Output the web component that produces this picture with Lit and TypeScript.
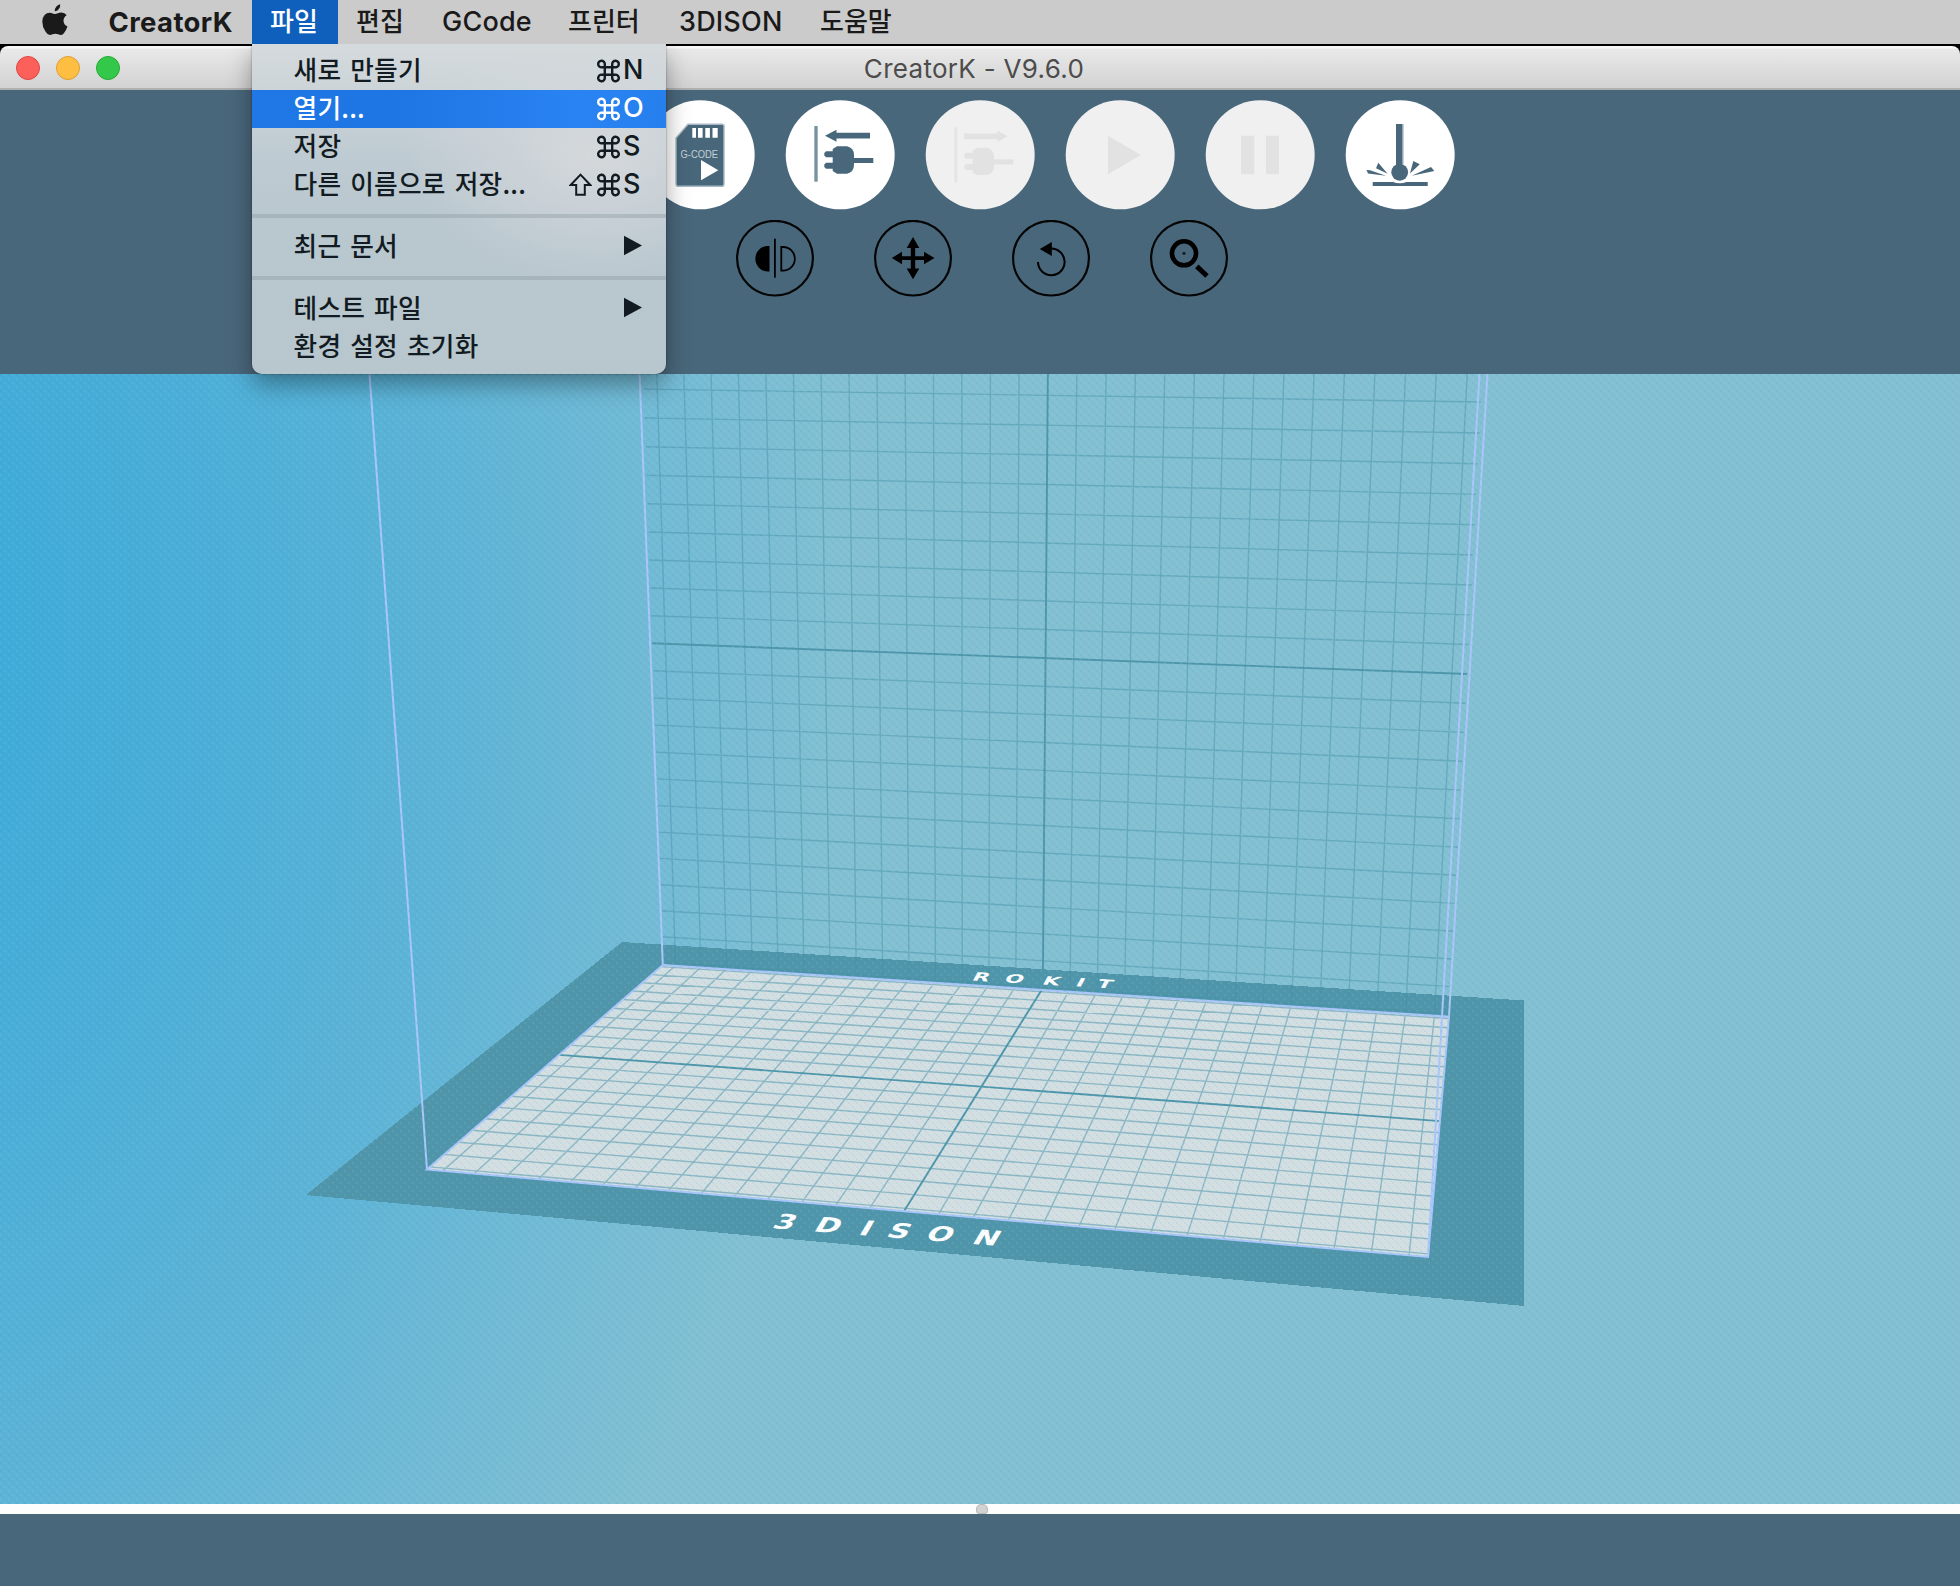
import { LitElement, html, svg, css, nothing } from "lit";
import { customElement, property } from "lit/decorators.js";
import { classMap } from "lit/directives/class-map.js";

type Pt = [number, number];

/** Projective map taking the rectangle (u0,v0)-(u1,v1) onto a quad given as
 *  [u0v0, u1v0, u1v1, u0v1]. */
function projector(u0: number, v0: number, u1: number, v1: number, q: Pt[]) {
  const [[x0, y0], [x1, y1], [x2, y2], [x3, y3]] = q;
  const dx1 = x1 - x2, dx2 = x3 - x2, dx3 = x0 - x1 + x2 - x3;
  const dy1 = y1 - y2, dy2 = y3 - y2, dy3 = y0 - y1 + y2 - y3;
  const den = dx1 * dy2 - dx2 * dy1;
  const g = (dx3 * dy2 - dx2 * dy3) / den;
  const h = (dx1 * dy3 - dx3 * dy1) / den;
  const a = x1 - x0 + g * x1, b = x3 - x0 + h * x3;
  const d = y1 - y0 + g * y1, e = y3 - y0 + h * y3;
  return (u: number, v: number): Pt => {
    const s = (u - u0) / (u1 - u0), t = (v - v0) / (v1 - v0);
    const w = g * s + h * t + 1;
    return [(a * s + b * t + x0) / w, (d * s + e * t + y0) / w];
  };
}

const seg = (p: Pt, q: Pt) =>
  `M${p[0].toFixed(1)} ${p[1].toFixed(1)}L${q[0].toFixed(1)} ${q[1].toFixed(1)}`;

// Scene corners, in viewport coordinates.
const FLOOR: Pt[] = [[662.8, 591], [1449, 642.7], [1428, 883], [427, 795.5]];
const HALF_W = 14.5;
const HALF_D = 10.2;
const BELOW = 12.1;
const floorAt = projector(-HALF_W, -HALF_D, HALF_W, HALF_D, FLOOR);
const wallAt = projector(-HALF_W, 0, HALF_W, BELOW, [
  [652.2, 269.3], [1467, 300], [1449, 642.7], [662.8, 591],
]);

function floorGrid() {
  let d = "";
  for (let u = -14; u <= 14; u++) if (u) d += seg(floorAt(u, -HALF_D), floorAt(u, HALF_D));
  for (let v = -10; v <= 10; v++) if (v) d += seg(floorAt(-HALF_W, v), floorAt(HALF_W, v));
  return d;
}
function wallGrid() {
  let d = "";
  for (let u = -14; u <= 14; u++) if (u) d += seg(wallAt(u, -11), wallAt(u, BELOW));
  for (let v = -11; v <= 12; v++) if (v) d += seg(wallAt(-HALF_W, v), wallAt(HALF_W, v));
  return d;
}

@customElement("build-scene")
class BuildScene extends LitElement {
  static styles = css`
    :host { display: block; height: 1130px; overflow: hidden; }
    .scene { display: block; width: 1960px; height: 1130px; }
    .thin { fill: none; stroke: #4590a5; stroke-width: 1.4; }
    .axis { fill: none; stroke: #4f96aa; stroke-width: 1.9; }
    .box { fill: none; stroke: #aac6fa; stroke-width: 2; }
    .label { font-family: "DejaVu Sans", sans-serif; font-weight: 700; fill: #fff; }
  `;
  render() {
    const pts = FLOOR.map((p) => p.join(",")).join(" ");
    return html`<svg class="scene" viewBox="0 0 1960 1130">
      <defs>
        <radialGradient id="sky" gradientUnits="userSpaceOnUse" cx="0" cy="0" r="1"
          gradientTransform="translate(-160 240) scale(1010 1500)">
          <stop offset="0.14" stop-color="#3fabd8"></stop>
          <stop offset="0.34" stop-color="#4aaed8"></stop>
          <stop offset="0.6" stop-color="#5db3d6"></stop>
          <stop offset="0.8" stop-color="#72bad5"></stop>
          <stop offset="1" stop-color="#84c0d2"></stop>
        </radialGradient>
        <pattern id="dither" width="8" height="8" patternUnits="userSpaceOnUse">
          <rect width="2" height="2" fill="#2f8fd0" opacity=".09"></rect>
          <rect x="4" y="4" width="2" height="2" fill="#2f8fd0" opacity=".09"></rect>
          <rect x="4" y="0" width="2" height="2" fill="#8ff0e0" opacity=".1"></rect>
          <rect x="0" y="4" width="2" height="2" fill="#8ff0e0" opacity=".1"></rect>
          <rect x="2" y="2" width="2" height="2" fill="#2f8fd0" opacity=".05"></rect>
          <rect x="6" y="6" width="2" height="2" fill="#2f8fd0" opacity=".05"></rect>
        </pattern>
      </defs>
      <rect width="1960" height="1130" fill="url(#sky)"></rect>
      <polygon fill="#5095a9" shape-rendering="crispEdges"
        points="622,568 1524,626.5 1524,932 306,821"></polygon>
      <path class="thin" opacity=".46" d=${wallGrid()}></path>
      <path class="axis" d=${seg(wallAt(-HALF_W, 0), wallAt(HALF_W, 0))}></path>
      <path class="axis" d=${seg(wallAt(0, -11), wallAt(0, BELOW))}></path>
      <polygon fill="#d5dfe2" points=${pts}></polygon>
      <path class="thin" opacity=".5" d=${floorGrid()}></path>
      <path class="axis" d=${seg(floorAt(-HALF_W, 0), floorAt(HALF_W, 0))}></path>
      <path class="axis" d=${seg(floorAt(0, -HALF_D), floorAt(0, HALF_D))}></path>
      <polygon class="box" points=${pts}></polygon>
      <path class="box" d="M369.5 0L427 795.5M639.6 0L662.8 591M1487.5 0L1449 642.7M1479.5 0L1428 883"></path>
      <text class="label" font-size="20" transform="matrix(1.5 .118 -.6 1 771 854)"
        x="0 27.5 57.5 76 102 133">3DISON</text>
      <text class="label" font-size="11.5" transform="matrix(1.9 .105 -.55 1 971 606.5)"
        x="0 17 37 54.5 65.5">ROKIT</text>
      <rect width="1960" height="1130" fill="url(#dither)"></rect>
    </svg>`;
  }
}

const plug = svg`
  <path d="M47.7 51.3V49L52 46.3H62Q69 48 69 55V65Q69 72 62 73.7H52L47.7 71V68.7H41L39.3 67V64.5L41 62.7H47.7V57.3H41L39.3 55.5V53L41 51.3Z"></path>
  <rect x="69" y="58" width="19.3" height="5"></rect>`;

const TOOLS: Record<string, unknown> = {
  card: svg`<g fill="#49677b">
      <path d="M43 24.3H77Q79 24.3 79 26.3V84Q79 86.3 77 86.3H33Q31 86.3 31 84V38Z" stroke="#a9b9c3" stroke-width="1.4"></path>
      <path fill="#fff" d="M47.3 28h3.7v9.7h-3.7zM53 28h4.6v9.7h-4.6zM60.3 28h4.6v9.7h-4.6zM67.5 28h5.2v9.7h-5.2z"></path>
      <path fill="#fff" d="M56 60L73.3 70.3L56 80.3Z"></path></g>
      <text class="code" x="35.5" y="58" textLength="37.5" lengthAdjust="spacingAndGlyphs">G-CODE</text>`,
  connect: svg`<rect x="29.3" y="26" width="3.4" height="55.7" fill="#7a93a2"></rect>
      <g fill="#49677b"><path d="M40 35.7L51.5 29.7V32.8H85V38.4H51.5V41.7Z"></path>${plug}</g>`,
  disconnect: svg`<g fill="#e2e2e2"><rect x="29.3" y="27.3" width="3.2" height="55.4" opacity=".8"></rect>
      <path d="M39 33.5H72.5V30.5L82.5 36.2L72.5 42V39.2H39Z"></path>
      <g transform="translate(0 1.4)">${plug}</g></g>`,
  play: svg`<path fill="#e2e2e2" d="M43 35.7L75.8 55L43 74.3Z"></path>`,
  pause: svg`<path fill="#e2e2e2" d="M36 35.7h13.3v38.6H36zM61 35.7h13v38.6H61z"></path>`,
  nozzle: svg`<g fill="#49677b"><rect x="51" y="24" width="6.4" height="42"></rect>
      <rect x="57.4" y="24" width="1.2" height="40" opacity=".5"></rect>
      <circle cx="54.7" cy="72.3" r="8.4"></circle>
      <path d="M27.7 82H48Q54.7 84.4 61.5 82H82.7V86H27.7Z"></path>
      <path d="M21.5 70L25 70.3L41 75.8L23 73.6ZM33.3 62.7L42.6 73.8L31 68.3ZM68.3 61L74.8 64.3L65 73.5ZM86 67L89.3 71L66.7 75.8Z"></path></g>`,
  mirror: svg`<path d="M33.5 26V51.5H31A12.8 12.8 0 0 1 31 26Z"></path>
      <rect x="38" y="18.7" width="1.8" height="39"></rect>
      <path fill="none" stroke="#000" stroke-width="1.8" d="M45.3 27H47A11.7 11.7 0 0 1 47 50.7H45.3Z"></path>`,
  move: svg`<path d="M39 17L45.3 28H41.2V36.2H50V31.8L60.5 38L50 44.2V40H41.2V48.5H45.3L39 59.3L32.7 48.5H36.8V40H28V44.2L17.8 38L28 31.8V36.2H36.8V28H32.7Z"></path>`,
  rotate: svg`<path fill="none" stroke="#000" stroke-width="2" d="M26 42A13.3 13.3 0 1 0 38.5 28.6"></path>
      <path d="M27.8 29L39.8 22V36Z"></path>`,
  zoom: svg`<circle cx="34" cy="33.3" r="12" fill="none" stroke="#000" stroke-width="4.6"></circle>
      <circle cx="34" cy="33.3" r="1.6" opacity=".7"></circle>
      <path stroke="#000" stroke-width="5" d="M46.8 46.4L57 56"></path>`,
};

@customElement("tool-button")
class ToolButton extends LitElement {
  @property() name = "";
  @property({ type: Boolean }) small = false;
  @property({ type: Boolean }) off = false;
  static styles = css`
    :host { display: block; }
    svg { display: block; }
    .code { font: 10.5px "Liberation Sans", sans-serif; fill: #c3d0d7; }
    .ring { fill: none; stroke: #050505; stroke-width: 2.2; }
  `;
  render() {
    const s = this.small ? 78 : 110;
    return html`<svg width=${s} height=${s} viewBox="0 0 ${s} ${s}">
      ${this.small
        ? svg`<ellipse class="ring" cx="39" cy="38.2" rx="37.9" ry="37.3"></ellipse>`
        : svg`<circle cx="55.2" cy="54.8" r="54.5" fill=${this.off ? "#f0f0f0" : "#fff"}></circle>`}
      ${TOOLS[this.name]}
    </svg>`;
  }
}

interface Item { label: string; shift?: boolean; key?: string; sub?: boolean; on?: boolean }
const GROUPS: Item[][] = [
  [
    { label: "새로 만들기", key: "N" },
    { label: "열기...", key: "O", on: true },
    { label: "저장", key: "S" },
    { label: "다른 이름으로 저장...", key: "S", shift: true },
  ],
  [{ label: "최근 문서", sub: true }],
  [{ label: "테스트 파일", sub: true }, { label: "환경 설정 초기화" }],
];

@customElement("file-menu")
class FileMenu extends LitElement {
  static styles = css`
    :host {
      display: block; box-sizing: border-box; width: 414px; height: 330px; padding-top: 8px;
      border-radius: 0 0 10px 10px; overflow: hidden; color: #121b21;
      font: 500 25.7px/38px Inter, "Noto Sans CJK KR", sans-serif;
      background:
        radial-gradient(ellipse 190px 130px at 345px 110px, rgba(214, 217, 220, .95), rgba(214, 217, 219, 0)),
        linear-gradient(#d5dadd 0, #cdd5d9 40px, #bfcbd2 110px, #b9c7cf 170px, #b8c6ce);
      box-shadow: inset 0 1px #a8acae;
    }
    .row { display: grid; grid-template-columns: 1fr 28px 26px 43px; height: 38px; padding-left: 41.5px; }
    .on { background: linear-gradient(90deg, #1f78e6, #1e75e4 35%, #2a83f2 78%, #2580ee); color: #fff; }
    .label {
      height: 33px; line-height: 33px; white-space: pre; font-weight: 500; font-family: "Noto Sans CJK KR", sans-serif;
      letter-spacing: .25px; word-spacing: 2.9px;
    }
    .key { line-height: 36px; font-size: 27px; }
    .icon { display: block; margin-top: 7px; }
    .gap { display: flex; align-items: center; height: 24px; }
    .line { flex: 1; height: 4px; background: rgba(140, 155, 163, .42); }
  `;
  private row(i: Item) {
    return html`<div class=${classMap({ row: true, on: !!i.on })}>
      <span class="label">${i.label}</span>
      <span>${i.shift
        ? html`<svg class="icon" width="23" height="24" viewBox="0 0 23 24" fill="none" stroke="currentColor" stroke-width="2">
            <path d="M11.5 1.6L21.3 12H15.8V21.8H7.2V12H1.7Z"></path></svg>`
        : nothing}</span>
      <span>${i.key
        ? html`<svg class="icon" width="23" height="24" viewBox="0 0 23 24" fill="none" stroke="currentColor" stroke-width="2.4">
            <path d="M7.8 8.3H4.9A3.3 3.3 0 1 1 7.8 5V19A3.3 3.3 0 1 1 4.9 15.7H18.1A3.3 3.3 0 1 1 15.2 19V5A3.3 3.3 0 1 1 18.1 8.3Z"></path></svg>`
        : nothing}</span>
      <span class="key">${i.key ?? nothing}${i.sub
        ? html`<svg class="icon" width="20" height="22" viewBox="0 0 20 22"><path fill="currentColor" d="M1 .8L19 10.5L1 20.2Z"></path></svg>`
        : nothing}</span>
    </div>`;
  }
  render() {
    return GROUPS.map((g, n) => html`
      ${n ? html`<div class="gap"><div class="line"></div></div>` : nothing}
      ${g.map((i) => this.row(i))}`);
  }
}

@customElement("app-root")
class AppRoot extends LitElement {
  static styles = css`
    :host { display: block; position: relative; width: 1960px; height: 1586px; overflow: hidden; background: #49677b; }
    .menubar {
      display: flex; box-sizing: border-box; height: 44px; padding-left: 42px; background: #cbcbcb; color: #1a1a1a;
      font: 500 27px/44px Inter, "Noto Sans CJK KR", sans-serif;
    }
    .apple { width: 66.5px; }
    .apple svg { display: block; margin-top: 4px; }
    .brand { width: 143.5px; font-weight: 700; font-size: 27.5px; letter-spacing: .35px; }
    .item { box-sizing: border-box; padding-left: 18px; white-space: nowrap; }
    .ko { font-family: "Noto Sans CJK KR", sans-serif; font-size: 26px; font-weight: 500; line-height: 40px; height: 44px; }
    .active { background: #0f5fbd; color: #fff; }
    .w86 { width: 86px; }
    .w87 { width: 87px; }
    .gcode { width: 125px; letter-spacing: .2px; padding-left: 17px; }
    .printer { width: 112px; }
    .dison { width: 140px; letter-spacing: .2px; padding-left: 17px; }
    .window { border-top: 2px solid #000; background: #000; }
    .titlebar {
      display: grid; grid-template-columns: 1fr auto 1fr; box-sizing: border-box; height: 44px;
      border-bottom: 2px solid #b0b0b0; border-radius: 8px 8px 0 0;
      background: linear-gradient(#f8f8f8 0, #f8f8f8 2px, #e9e9e9 3px, #d2d2d2);
    }
    .lights { display: flex; gap: 16px; padding: 10px 0 0 16px; }
    .light { box-sizing: border-box; width: 24px; height: 24px; border-radius: 50%; }
    .red { background: #fc605b; border: 1.5px solid #df4744; }
    .yellow { background: #fdbe41; border: 1.5px solid #dd9f33; }
    .green { background: #34c84a; border: 1.5px solid #28aa35; }
    .title { font: 400 26px/45px Inter, sans-serif; color: #4c4c4c; white-space: nowrap; letter-spacing: .3px; padding-right: 12px; }
    .tools { box-sizing: border-box; height: 284px; padding-top: 10px; background: #49677b; }
    .main { display: flex; gap: 30px; padding-left: 645px; height: 110px; }
    .sub { display: flex; gap: 60px; padding: 10px 0 0 736px; }
    .splitter { display: flex; justify-content: center; height: 10px; background: #fdfdfd; }
    .grip { box-sizing: border-box; width: 12px; height: 10px; margin-left: 4px; border: 1px solid #b8b8b8; border-radius: 5px 5px 3px 3px; background: #d2d2d2; }
    .status { height: 72px; background: #49677b; }
    .dropdown {
      position: absolute; left: 252px; top: 44px; border-radius: 0 0 10px 10px;
      box-shadow: 0 10px 24px rgba(0, 0, 0, .36), 0 0 2px rgba(0, 0, 0, .45);
      clip-path: inset(0 -60px -60px -60px);
    }
  `;
  render() {
    return html`
      <nav class="menubar">
        <div class="apple"><svg width="26" height="32" viewBox="0 0 26 32" fill="#1a1a1a">
          <path d="M18.2 .2Q18.6 3 16.7 5.2Q15 7.3 12.8 7.2Q12.6 4.6 14.4 2.5Q16 .6 18.2 .2Z"></path>
          <path d="M24.7 11.2Q21.4 13.2 21.5 16.8Q21.6 20.8 25.5 22.6Q24.4 25.8 22.4 28.4Q20.9 30.9 18.8 31Q17.5 31 16.2 30.3Q14.8 29.7 13.4 29.7Q11.9 29.7 10.5 30.3Q9.2 31 7.9 31Q5.7 31 3.6 27.7Q.2 22.8 .3 17.4Q.4 13.4 2.6 11Q4.6 8.7 7.6 8.7Q9.1 8.7 10.7 9.4Q12.4 10.1 13.2 10.1Q14 10.1 15.9 9.3Q17.8 8.5 19.4 8.6Q22.9 8.8 24.7 11.2Z"></path>
        </svg></div>
        <div class="brand">CreatorK</div>
        <div class="item ko active w86">파일</div>
        <div class="item ko w87">편집</div>
        <div class="item gcode">GCode</div>
        <div class="item ko printer">프린터</div>
        <div class="item dison">3DISON</div>
        <div class="item ko">도움말</div>
      </nav>
      <main class="window">
        <header class="titlebar">
          <div class="lights"><i class="light red"></i><i class="light yellow"></i><i class="light green"></i></div>
          <div class="title">CreatorK - V9.6.0</div>
        </header>
        <section class="tools">
          <div class="main">
            <tool-button name="card"></tool-button>
            <tool-button name="connect"></tool-button>
            <tool-button name="disconnect" off></tool-button>
            <tool-button name="play" off></tool-button>
            <tool-button name="pause" off></tool-button>
            <tool-button name="nozzle"></tool-button>
          </div>
          <div class="sub">
            <tool-button small name="mirror"></tool-button>
            <tool-button small name="move"></tool-button>
            <tool-button small name="rotate"></tool-button>
            <tool-button small name="zoom"></tool-button>
          </div>
        </section>
        <build-scene></build-scene>
        <div class="splitter"><div class="grip"></div></div>
        <footer class="status"></footer>
      </main>
      <file-menu class="dropdown"></file-menu>
    `;
  }
}
